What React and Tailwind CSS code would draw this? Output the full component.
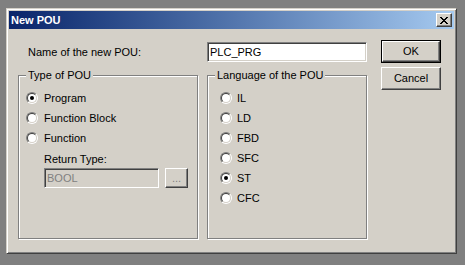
import React from "react";

const raised =
  "bg-[#d4d0c8] border border-t-white border-l-white border-r-[#404040] border-b-[#404040] shadow-[inset_-1px_-1px_0_#808080]";
const sunken =
  "border border-t-[#808080] border-l-[#808080] border-r-white border-b-white shadow-[inset_1px_1px_0_#404040,inset_-1px_-1px_0_#d4d0c8]";

const Radio = ({ checked }) => (
  <span className="block w-[12px] h-[12px] shrink-0 rounded-full border border-t-[#808080] border-l-[#808080] border-r-white border-b-white">
    <span className="flex items-center justify-center w-full h-full rounded-full border border-t-[#404040] border-l-[#404040] border-r-[#d4d0c8] border-b-[#d4d0c8] bg-white">
      {checked && <span className="block w-[4px] h-[4px] rounded-full bg-black" />}
    </span>
  </span>
);

const Option = ({ label, checked, gap }) => (
  <div className={`flex items-center h-[20px] ${gap}`}>
    <Radio checked={checked} />
    <span>{label}</span>
  </div>
);

const Group = ({ title, className, children }) => (
  <div className={`relative border border-[#808080] shadow-[inset_1px_1px_0_#fff,1px_1px_0_#fff] ${className}`}>
    {/* legend sits over the etched line */}
    <span className="absolute -top-[7px] left-[7px] px-[2px] bg-[#d4d0c8] leading-[13px]">{title}</span>
    {children}
  </div>
);

const CloseGlyph = () => (
  <svg width="8" height="7" viewBox="0 0 8 7" shapeRendering="crispEdges">
    <g fill="#000">
      <rect x="0" y="0" width="2" height="1" />
      <rect x="6" y="0" width="2" height="1" />
      <rect x="1" y="1" width="2" height="1" />
      <rect x="5" y="1" width="2" height="1" />
      <rect x="2" y="2" width="4" height="1" />
      <rect x="3" y="3" width="2" height="1" />
      <rect x="2" y="4" width="4" height="1" />
      <rect x="1" y="5" width="2" height="1" />
      <rect x="5" y="5" width="2" height="1" />
      <rect x="0" y="6" width="2" height="1" />
      <rect x="6" y="6" width="2" height="1" />
    </g>
  </svg>
);

export default function App() {
  const languages = ["IL", "LD", "FBD", "SFC", "ST", "CFC"];

  return (
    <div className="w-[465px] h-[265px] bg-[#808080] pt-[8px] pl-[6px] font-['Liberation_Sans',Arial,sans-serif] text-[11px] text-black">
      <div className="w-[451px] h-[246px] bg-[#d4d0c8] border border-t-[#d4d0c8] border-l-[#d4d0c8] border-r-[#404040] border-b-[#404040] shadow-[inset_1px_1px_0_#fff,inset_-1px_-1px_0_#808080] p-[2px]">
        {/* Title bar */}
        <div className="flex items-center h-[18px] pl-[2px] pr-[2px] bg-gradient-to-r from-[#0a246a] to-[#a6caf0]">
          <span className="font-bold text-white leading-[18px]">New POU</span>
          <div className={`ml-auto flex items-center justify-center w-[16px] h-[14px] ${raised}`}>
            <CloseGlyph />
          </div>
        </div>

        {/* Client area */}
        <div className="flex pt-[11px] pl-[9px]">
          <div className="w-[349px]">
            <div className="flex items-center h-[20px] mt-[2px]">
              <span className="pl-[10px]">Name of the new POU:</span>
              <div className={`ml-auto flex items-center w-[160px] h-[20px] pl-[2px] bg-white ${sunken}`}>PLC_PRG</div>
            </div>

            <div className="flex gap-[9px] mt-[13px]">
              <Group title="Type of POU" className="w-[180px] h-[164px] pt-[12px] pl-[7px]">
                <Option label="Program" checked gap="gap-[6px]" />
                <Option label="Function Block" gap="gap-[6px]" />
                <Option label="Function" gap="gap-[6px]" />
                <div className="pl-[18px] mt-[4px]">
                  <div className="h-[14px] leading-[14px]">Return Type:</div>
                  <div className="flex gap-[6px] mt-[2px]">
                    <div className={`flex items-center w-[115px] h-[20px] pl-[2px] text-[#808080] ${sunken}`}>BOOL</div>
                    <div className={`flex items-end justify-center w-[23px] h-[20px] pb-[3px] text-[#808080] leading-[11px] ${raised}`}>...</div>
                  </div>
                </div>
              </Group>

              <Group title="Language of the POU" className="w-[160px] h-[164px] pt-[12px] pl-[12px]">
                {languages.map((l) => (
                  <Option key={l} label={l} checked={l === "ST"} gap="gap-[5px]" />
                ))}
              </Group>
            </div>
          </div>

          <div className="flex flex-col gap-[4px] ml-[14px]">
            <div className="w-[60px] h-[23px] border border-black">
              <div className={`flex items-center justify-center w-full h-full ${raised}`}>OK</div>
            </div>
            <div className={`flex items-center justify-center w-[60px] h-[23px] ${raised}`}>Cancel</div>
          </div>
        </div>
      </div>
    </div>
  );
}
